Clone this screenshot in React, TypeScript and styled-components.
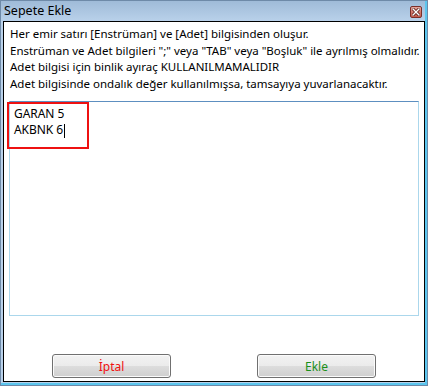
import React from 'react';
import styled, { createGlobalStyle } from 'styled-components';

const GlobalStyle = createGlobalStyle`
  html, body {
    margin: 0;
    padding: 0;
    background: #ffffff;
  }
  body {
    font-family: 'Noto Sans', 'Open Sans', sans-serif;
  }
`;

const infoLines = [
  'Her emir satırı [Enstrüman] ve [Adet] bilgisinden oluşur.',
  'Enstrüman ve Adet bilgileri ";" veya "TAB" veya "Boşluk" ile ayrılmış olmalıdır.',
  'Adet bilgisi için binlik ayıraç KULLANILMAMALIDIR',
  'Adet bilgisinde ondalık değer kullanılmışsa, tamsayıya yuvarlanacaktır.',
];

const orders = ['GARAN 5', 'AKBNK 6'];

const App = () => {
  return (
    <>
      <GlobalStyle />
      <Window>
        <TitleBar>
          <Title>Sepete Ekle</Title>
          <CloseButton aria-label="Kapat">
            <svg width="8" height="8" viewBox="0 0 8 8">
              <path d="M1 1 L7 7 M7 1 L1 7" stroke="#5a1a14" strokeWidth="3" strokeLinecap="square" />
              <path d="M1 1 L7 7 M7 1 L1 7" stroke="#ffffff" strokeWidth="1.4" strokeLinecap="square" />
            </svg>
          </CloseButton>
        </TitleBar>
        <Client>
          <Info>
            {infoLines.map(line => (
              <InfoLine key={line}>{line}</InfoLine>
            ))}
          </Info>
          <EditorWrap>
            <Editor>
              {orders.map((o, i) => (
                <EditorLine key={o}>
                  {o}
                  {i === orders.length - 1 && <Caret />}
                </EditorLine>
              ))}
            </Editor>
            <Highlight />
          </EditorWrap>
          <ButtonRow>
            <ButtonCell>
              <DialogButton $tone="cancel">İptal</DialogButton>
            </ButtonCell>
            <ButtonCell>
              <DialogButton $tone="ok">Ekle</DialogButton>
            </ButtonCell>
          </ButtonRow>
        </Client>
      </Window>
    </>
  );
};

const Window = styled.div`
  width: 428px;
  height: 386px;
  box-sizing: border-box;
  border: 1px solid #6e8aa8;
  background: linear-gradient(to bottom, #9fbbd8 0px, #b9d1ea 20px, #b9d1ea 100%);
  display: flex;
  flex-direction: column;
  box-shadow: inset 0 -2px 0 #5cc6ee, inset -2px 0 0 #5cc6ee;
`;

const TitleBar = styled.div`
  height: 20px;
  display: flex;
  align-items: center;
  justify-content: space-between;
  padding: 0 5px 0 3px;
`;

const Title = styled.span`
  font-size: 12.5px;
  color: #000;
  line-height: 20px;
`;

const CloseButton = styled.div`
  width: 12px;
  height: 12px;
  box-sizing: border-box;
  border: 1px solid #7a2e28;
  border-radius: 2px;
  background: linear-gradient(to bottom, #e6a79e 0%, #d27a6e 50%, #c45a4c 100%);
  display: flex;
  align-items: center;
  justify-content: center;
  margin-top: 1px;
`;

const Client = styled.div`
  flex: 1;
  margin: 0 2px 3px 2px;
  border: 1px solid #000;
  background: #fff;
  display: flex;
  flex-direction: column;
  padding: 4px 5px 3px 5px;
  box-sizing: border-box;
`;

const Info = styled.div`
  padding-left: 1px;
  margin-bottom: 8px;
`;

const InfoLine = styled.div`
  font-size: 11.5px;
  letter-spacing: -0.01px;
  line-height: 16.7px;
  color: #000;
  white-space: nowrap;
`;

const EditorWrap = styled.div`
  position: relative;
  height: 215px;
`;

const Editor = styled.div`
  height: 100%;
  box-sizing: border-box;
  border: 1px solid #abd7ec;
  border-top-color: #5d8fc0;
  padding: 4px 4px;
`;

const EditorLine = styled.div`
  font-size: 12px;
  letter-spacing: -0.05px;
  line-height: 16.5px;
  color: #000;
  display: flex;
  align-items: center;
`;

const Caret = styled.span`
  display: inline-block;
  width: 1px;
  height: 14px;
  background: #000;
  margin-left: 1px;
`;

const Highlight = styled.div`
  position: absolute;
  left: -2px;
  top: 1px;
  width: 82px;
  height: 47px;
  box-sizing: border-box;
  border: 2px solid #ee1111;
  pointer-events: none;
`;

const ButtonRow = styled.div`
  margin-top: auto;
  display: grid;
  grid-template-columns: 1fr 1fr;
`;

const ButtonCell = styled.div`
  display: flex;
  justify-content: center;
`;

const DialogButton = styled.button<{ $tone: 'cancel' | 'ok' }>`
  width: 119px;
  height: 24px;
  box-sizing: border-box;
  border: 1px solid #707070;
  border-radius: 3px;
  background: linear-gradient(to bottom, #f2f2f2 0%, #ebebeb 50%, #dddddd 50%, #cfcfcf 100%);
  box-shadow: inset 0 0 0 1px #fbfbfb;
  font-family: 'Noto Sans', 'Open Sans', sans-serif;
  font-size: 12px;
  color: ${props => (props.$tone === 'cancel' ? '#f01010' : '#1a8f1a')};
  padding: 0;
  cursor: default;
`;

export default App;
